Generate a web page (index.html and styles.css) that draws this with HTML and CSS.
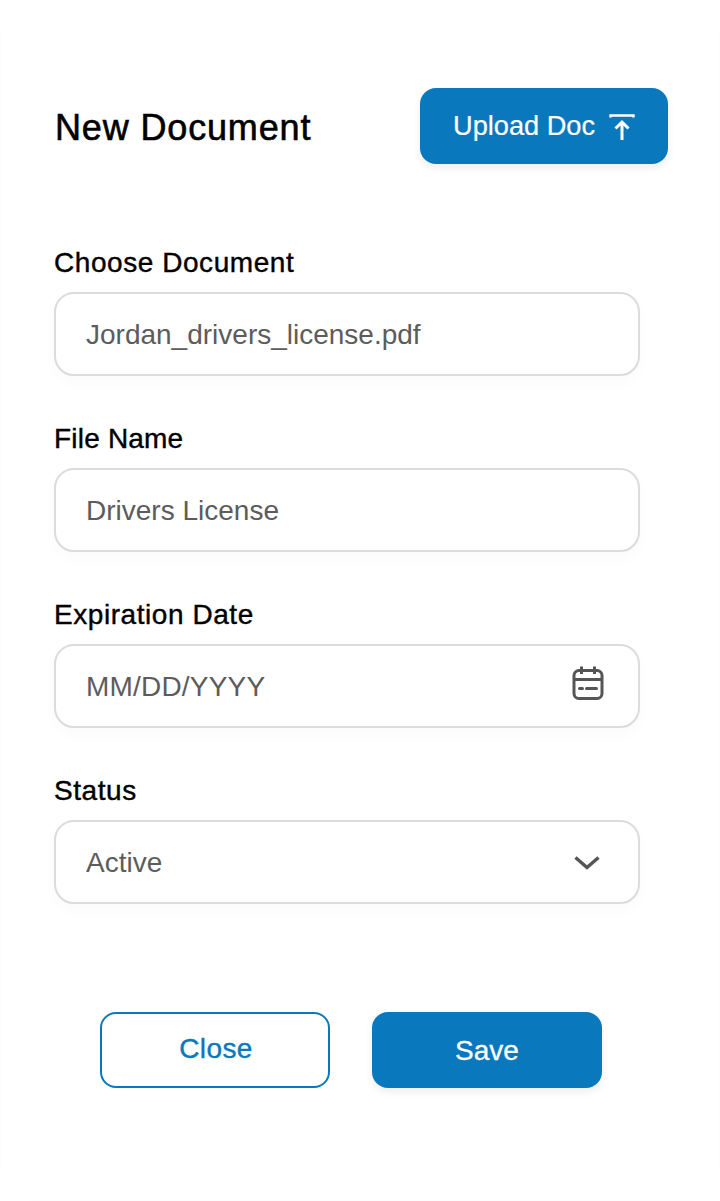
FILE: index.html
```html
<!DOCTYPE html>
<html lang="en">
<head>
<meta charset="utf-8">
<title>New Document</title>
<link rel="stylesheet" href="styles.css">
</head>
<body>
<main class="card">
  <header class="head">
    <h1 class="title">New Document</h1>
    <button class="btn btn-primary btn-upload" type="button">
      <span>Upload Doc</span>
      <svg class="upload-icon" width="26" height="28" viewBox="0 0 26 28" fill="none" stroke="#fff" stroke-width="3">
        <path d="M1.5 4.5V2.5H24.5V4.5" stroke-width="2.4"/>
        <path d="M13 27V10M6.5 15.5L13 9L19.5 15.5"/>
      </svg>
    </button>
  </header>
  <div class="fields">
    <div class="field">
      <label class="label">Choose Document</label>
      <div class="input"><span>Jordan_drivers_license.pdf</span></div>
    </div>
    <div class="field">
      <label class="label label-tight">File Name</label>
      <div class="input"><span>Drivers License</span></div>
    </div>
    <div class="field">
      <label class="label">Expiration Date</label>
      <div class="input"><span class="date">MM/DD/YYYY</span>
        <svg class="cal" width="32" height="36" viewBox="0 0 32 36" fill="none" stroke="#555" stroke-width="3">
          <rect x="2" y="5.5" width="28" height="28" rx="5"/>
          <path d="M2 14.5H30M9.5 1.5V9M22.5 1.5V9"/>
          <path d="M7.5 23.5H10.5M14.5 23.5H24.5" stroke-linecap="round"/>
        </svg>
      </div>
    </div>
    <div class="field">
      <label class="label">Status</label>
      <div class="input"><span>Active</span>
        <svg class="chev" width="26" height="14" viewBox="0 0 26 14" fill="none" stroke="#555" stroke-width="3.4">
          <path d="M1.5 1.5L13 11.5L24.5 1.5"/>
        </svg>
      </div>
    </div>
  </div>
  <footer class="actions">
    <button class="btn btn-outline" type="button"><span class="close-text">Close</span></button>
    <button class="btn btn-primary btn-save" type="button">Save</button>
  </footer>
</main>
</body>
</html>
```
FILE: styles.css
```css
* { box-sizing: border-box; }
html, body { margin: 0; padding: 0; background: #fff; }
body { font-family: "Liberation Sans", Arial, sans-serif; color: #000; }
.card {
  width: 720px;
  height: 1201px;
  border-radius: 32px;
  border: 1px dotted #fcfcfc;
  padding: 87px 51px 0 53px;
  overflow: hidden;
}
.head {
  display: flex;
  justify-content: space-between;
  align-items: center;
  height: 76px;
}
.title {
  margin: 4px 0 0 1px;
  font-size: 36px;
  font-weight: 400;
  letter-spacing: 0.85px;
  -webkit-text-stroke: 0.6px #000;
}
.btn {
  font-family: inherit;
  border-radius: 16px;
  font-size: 28px;
  cursor: pointer;
}
.btn-primary {
  background: #0a78bc;
  color: #fff;
  border: 0;
  box-shadow: 0 4px 8px rgba(0,0,0,.07);
}
.btn-upload {
  width: 248px;
  height: 76px;
  display: flex;
  align-items: center;
  padding: 0 0 0 33px;
  gap: 15px;
  font-size: 27.2px;
  -webkit-text-stroke: 0.2px #fff;
}
.upload-icon { margin-top: 2px; margin-left: -1px; }
.fields {
  margin-top: 82px;
  display: flex;
  flex-direction: column;
  gap: 46px;
  width: 586px;
}
.field { display: flex; flex-direction: column; gap: 11px; }
.label {
  font-size: 28px;
  line-height: 35px;
  letter-spacing: 0.56px;
  margin-top: -1px;
  margin-bottom: 1px;
  -webkit-text-stroke: 0.4px #000;
}
.label-tight { letter-spacing: 0.2px; }
.input {
  height: 84px;
  border: 2px solid #dcdcdc;
  border-radius: 20px;
  box-shadow: 0 6px 14px rgba(0,0,0,.025);
  background: #fff;
  display: flex;
  align-items: center;
  justify-content: space-between;
  padding: 2px 36px 0 30px;
  font-size: 28px;
  color: #5c5c5c;
}
.date { letter-spacing: 0.2px; }
.cal { margin-right: -2px; margin-top: -8px; }
.chev { margin-right: 2px; margin-top: 0; }
.actions {
  margin-top: 108px;
  margin-left: 46px;
  display: flex;
  gap: 42px;
}
.btn-outline {
  width: 230px;
  height: 76px;
  padding: 0 0 2px 2px;
  background: #fff;
  border: 2px solid #0a78bc;
  color: #0a78bc;
  letter-spacing: 0.4px;
  -webkit-text-stroke: 0.4px #0a78bc;
}
.btn-save {
  width: 230px;
  height: 76px;
  padding-top: 3px;
  -webkit-text-stroke: 0.3px #fff;
}
```
